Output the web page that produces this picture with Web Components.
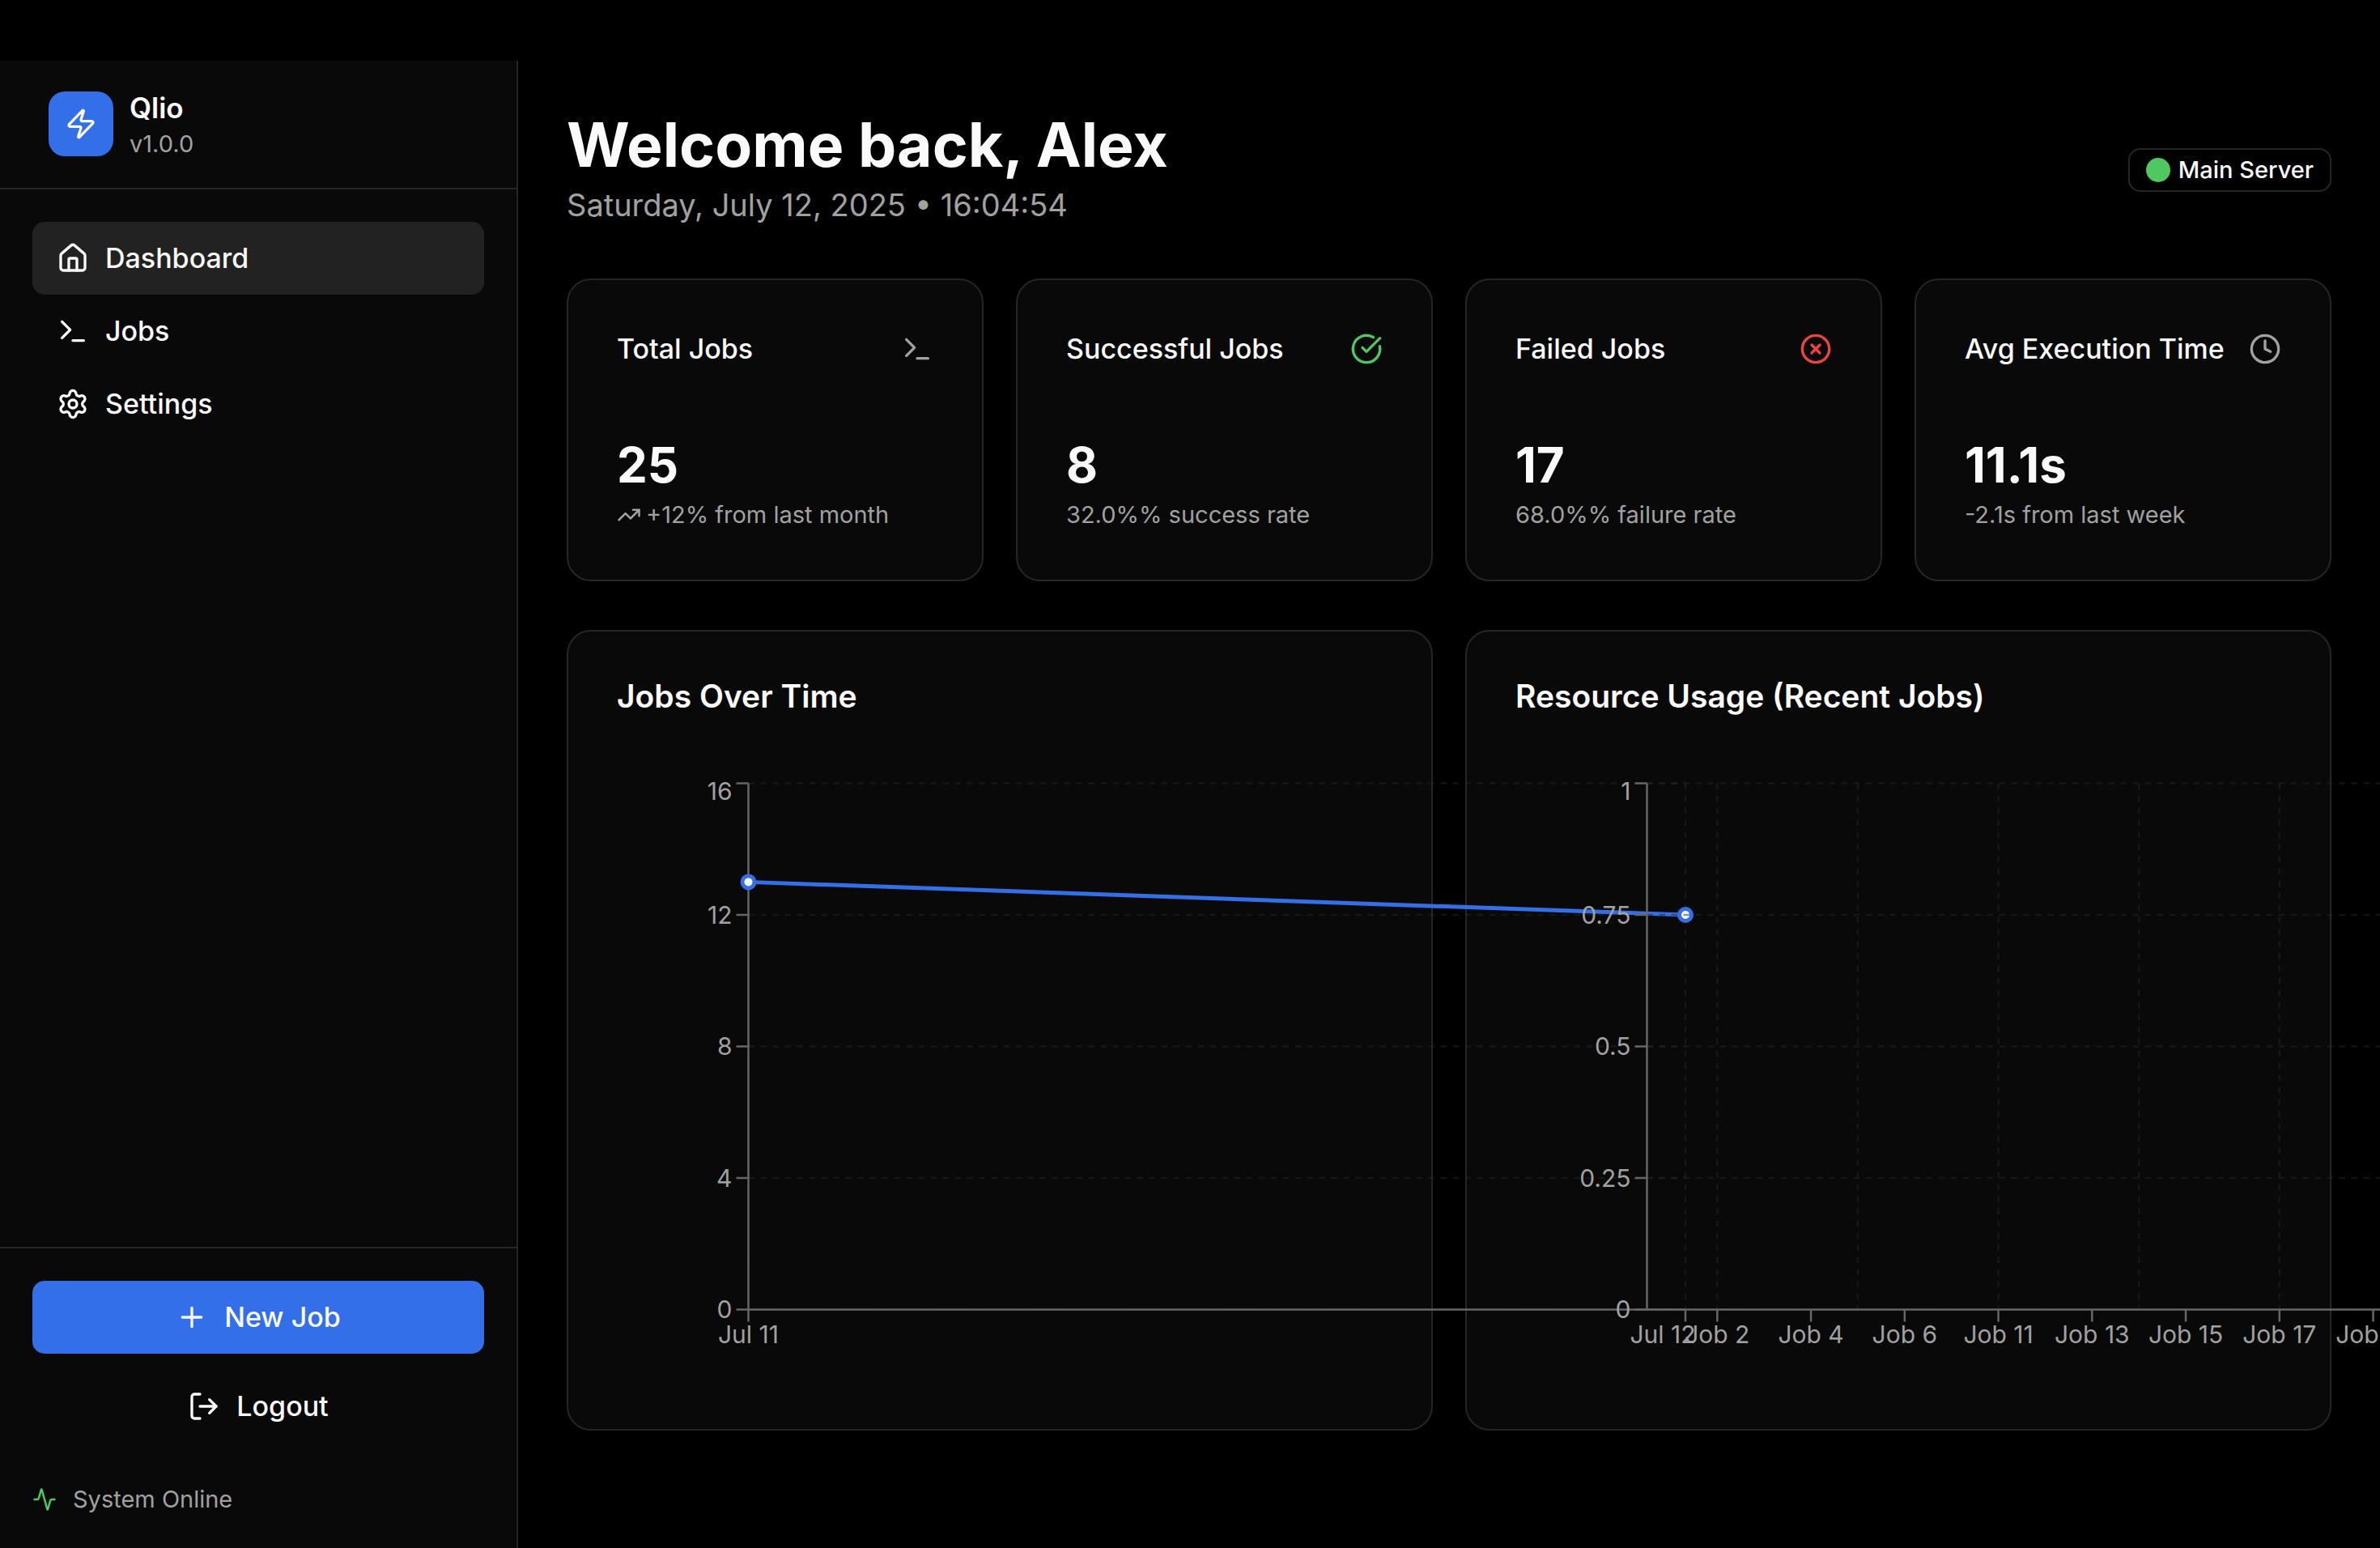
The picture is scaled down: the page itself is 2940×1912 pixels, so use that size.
<!DOCTYPE html>
<html lang="en">
<head>
<meta charset="utf-8">
<meta name="viewport" content="width=device-width, initial-scale=1">
<title>Qlio Dashboard</title>
<style>
  :root {
    --bg: #000;
    --surface: #090909;
    --accent: #222;
    --border: #262626;
    --text: #fafafa;
    --muted: #a1a1a1;
    --primary: #336fe8;
    --success: #50c860;
    --danger: #ea4540;
  }
  html, body { margin: 0; }
  body {
    background: var(--bg);
    color: var(--text);
    font-family: Inter, "Liberation Sans", sans-serif;
    font-size: 29px;
    line-height: 40px;
  }
</style>
</head>
<body>
<qlio-app></qlio-app>

<script>
const ICONS = {
  zap: '<path d="M4 14a1 1 0 0 1-.78-1.63l9.9-10.2a.5.5 0 0 1 .86.46l-1.92 6.02A1 1 0 0 0 13 10h7a1 1 0 0 1 .78 1.63l-9.9 10.2a.5.5 0 0 1-.86-.46l1.92-6.02A1 1 0 0 0 11 14z"/>',
  house: '<path d="M15 21v-8a1 1 0 0 0-1-1h-4a1 1 0 0 0-1 1v8"/><path d="M3 10a2 2 0 0 1 .709-1.528l7-5.999a2 2 0 0 1 2.582 0l7 5.999A2 2 0 0 1 21 10v9a2 2 0 0 1-2 2H5a2 2 0 0 1-2-2z"/>',
  terminal: '<path d="M12 19h8"/><path d="m4 17 6-6-6-6"/>',
  settings: '<path d="M9.671 4.136a2.34 2.34 0 0 1 4.659 0 2.34 2.34 0 0 0 3.319 1.915 2.34 2.34 0 0 1 2.33 4.033 2.34 2.34 0 0 0 0 3.831 2.34 2.34 0 0 1-2.33 4.033 2.34 2.34 0 0 0-3.319 1.915 2.34 2.34 0 0 1-4.659 0 2.34 2.34 0 0 0-3.32-1.915 2.34 2.34 0 0 1-2.33-4.033 2.34 2.34 0 0 0 0-3.831A2.34 2.34 0 0 1 6.35 6.051a2.34 2.34 0 0 0 3.319-1.915"/><circle cx="12" cy="12" r="3"/>',
  plus: '<path d="M5 12h14"/><path d="M12 5v14"/>',
  logout: '<path d="m16 17 5-5-5-5"/><path d="M21 12H9"/><path d="M9 21H5a2 2 0 0 1-2-2V5a2 2 0 0 1 2-2h4"/>',
  activity: '<path d="M22 12h-2.48a2 2 0 0 0-1.93 1.46l-2.35 8.36a.25.25 0 0 1-.48 0L9.24 2.18a.25.25 0 0 0-.48 0l-2.35 8.36A2 2 0 0 1 4.49 12H2"/>',
  check: '<path d="M21.801 10A10 10 0 1 1 17 3.335"/><path d="m9 11 3 3L22 4"/>',
  cross: '<circle cx="12" cy="12" r="10"/><path d="m15 9-6 6"/><path d="m9 9 6 6"/>',
  clock: '<circle cx="12" cy="12" r="10"/><path d="M12 6v6l4 2"/>',
  trend: '<path d="M16 7h6v6"/><path d="m22 7-8.5 8.5-5-5L2 17"/>'
};

function define(name, html, setup) {
  const template = document.createElement('template');
  template.innerHTML = html;
  customElements.define(name, class extends HTMLElement {
    constructor() {
      super();
      this.attachShadow({ mode: 'open' }).append(template.content.cloneNode(true));
    }
    connectedCallback() {
      if (setup) setup(this, this.shadowRoot);
    }
  });
}

class QlioIcon extends HTMLElement {
  static observedAttributes = ['name'];
  constructor() {
    super();
    this.attachShadow({ mode: 'open' }).innerHTML = `
      <style>
        :host { display: block; flex: none; width: 40px; height: 40px; }
        :host([small]) { width: 30px; height: 30px; }
        svg { display: block; width: 100%; height: 100%; }
      </style>
      <svg viewBox="0 0 24 24" fill="none" stroke="currentColor" stroke-width="2" stroke-linecap="round" stroke-linejoin="round" aria-hidden="true"></svg>`;
  }
  attributeChangedCallback(attribute, previous, name) {
    this.shadowRoot.querySelector('svg').innerHTML = ICONS[name] || '';
  }
}
customElements.define('qlio-icon', QlioIcon);

define('nav-item', `
  <style>
    :host { display: block; }
    a {
      display: flex; align-items: center; gap: 20px;
      height: 90px; padding: 0 30px; border-radius: 15px; box-sizing: border-box;
      color: inherit; text-decoration: none;
      font-size: 34px; font-weight: 500; line-height: 50px;
    }
    :host([active]) a { background: var(--accent); }
  </style>
  <a href="#"><qlio-icon></qlio-icon><slot></slot></a>
`, (host, root) => { root.querySelector('qlio-icon').setAttribute('name', host.getAttribute('icon')); });

define('action-button', `
  <style>
    :host { display: block; }
    button {
      display: flex; align-items: center; justify-content: center; gap: 20px;
      width: 100%; height: 90px; padding: 0; border: 0; border-radius: 15px;
      background: none; color: inherit; font: inherit; cursor: pointer;
      font-size: 34px; font-weight: 500; line-height: 50px;
    }
    :host([primary]) button { background: var(--primary); }
  </style>
  <button type="button"><slot name="icon"></slot><slot></slot></button>
`);

define('app-sidebar', `
  <style>
    :host {
      display: flex; flex-direction: column; flex: none; width: 640px; box-sizing: border-box;
      background: var(--surface); border-right: 2px solid var(--border);
    }
    header {
      display: flex; align-items: center; gap: 20px;
      height: 155px; padding: 0 60px 2px; border-bottom: 2px solid var(--border);
    }
    .logo {
      display: flex; align-items: center; justify-content: center;
      width: 80px; height: 80px; border-radius: 20px; background: var(--primary);
    }
    .name { font-size: 35px; font-weight: 600; line-height: 50px; }
    .version { color: var(--muted); }
    nav { flex: 1; padding: 40px; }
    footer {
      display: flex; flex-direction: column; gap: 20px;
      padding: 40px; border-top: 2px solid var(--border);
    }
    .status { display: flex; align-items: center; gap: 20px; padding-top: 30px; color: var(--muted); }
    .status qlio-icon { color: var(--success); }
  </style>
  <header>
    <div class="logo"><qlio-icon name="zap"></qlio-icon></div>
    <div>
      <div class="name">Qlio</div>
      <div class="version">v1.0.0</div>
    </div>
  </header>
  <nav>
    <nav-item icon="house" active>Dashboard</nav-item>
    <nav-item icon="terminal">Jobs</nav-item>
    <nav-item icon="settings">Settings</nav-item>
  </nav>
  <footer>
    <action-button primary><qlio-icon slot="icon" name="plus"></qlio-icon>New Job</action-button>
    <action-button><qlio-icon slot="icon" name="logout"></qlio-icon>Logout</action-button>
    <div class="status"><qlio-icon small name="activity"></qlio-icon><span>System Online</span></div>
  </footer>
`);

define('page-header', `
  <style>
    :host { display: flex; align-items: center; justify-content: space-between; }
    h1 { margin: 0; font-size: 75px; font-weight: 700; line-height: 87px; }
    p { margin: 0; font-size: 38px; line-height: 62px; color: var(--muted); }
    .badge {
      display: flex; align-items: center; gap: 10px;
      padding: 5px 20px; border: 2px solid var(--border); border-radius: 15px;
      font-weight: 500;
    }
    .dot { width: 30px; height: 30px; border-radius: 50%; background: var(--success); }
  </style>
  <div>
    <h1>Welcome back, Alex</h1>
    <p>Saturday, July 12, 2025 • 16:04:54</p>
  </div>
  <div class="badge"><span class="dot"></span><span>Main Server</span></div>
`);

define('stat-card', `
  <style>
    :host {
      display: block; padding: 60px; border: 2px solid var(--border); border-radius: 30px;
      background: var(--surface);
    }
    header { display: flex; align-items: center; justify-content: space-between; height: 50px; margin-bottom: 76px; }
    h2 { margin: 0; font-size: 34px; font-weight: 500; line-height: 50px; white-space: nowrap; }
    .value { font-size: 60px; font-weight: 700; line-height: 84px; }
    .note { display: flex; align-items: center; gap: 6px; color: var(--muted); }
  </style>
  <header><h2><slot name="title"></slot></h2><slot name="icon"></slot></header>
  <div class="value"><slot name="value"></slot></div>
  <div class="note"><slot></slot></div>
`);

define('chart-card', `
  <style>
    :host {
      display: block; min-width: 0; padding: 60px; border: 2px solid var(--border); border-radius: 30px;
      background: var(--surface);
    }
    h2 { margin: 0 0 75px; font-size: 39px; font-weight: 600; line-height: 40px; white-space: nowrap; }
  </style>
  <h2><slot name="title"></slot></h2>
  <slot></slot>
`);

/* Chart geometry is in chart units: 533 x 300, drawn at 2.5 px per unit. */
define('axis-chart', `
  <style>
    :host { display: block; position: relative; height: 750px; }
    svg { display: block; width: 1332px; height: 750px; overflow: visible; }
    text { font-size: 12px; fill: var(--muted); }
    .grid { stroke: var(--border); stroke-opacity: .5; stroke-dasharray: 3 3; }
    .axis { stroke: #666; }
    .series { stroke: var(--primary); stroke-width: 2; }
    .series circle { fill: #fff; }
  </style>
  <svg viewBox="0 0 533 300" preserveAspectRatio="xMinYMin slice" fill="none"></svg>
`, (host, root) => {
  const width = 533, left = 65, right = 528, top = 5, bottom = 265;
  const data = JSON.parse(host.getAttribute('data'));
  const span = right - left;
  const xAt = i => data.band ? left + span * (i + .5) / data.count : left + span * i / (data.count - 1);
  const yAt = v => bottom - (bottom - top) * v / data.max;
  const line = (x1, y1, x2, y2) => `<line x1="${x1}" y1="${y1}" x2="${x2}" y2="${y2}"/>`;
  let grid = '', axis = line(left, bottom, right, bottom) + line(left, top, left, bottom), labels = '';
  data.y.forEach(v => {
    const y = yAt(v);
    grid += line(left, y, right, y);
    axis += line(left - 6, y, left, y);
    labels += `<text x="${left - 8}" y="${Math.max(y, 9) + 4.3}" text-anchor="end">${v}</text>`;
  });
  data.grid.forEach(i => { grid += line(xAt(i), top, xAt(i), bottom); });
  data.x.forEach(([i, name]) => {
    const x = xAt(i);
    axis += line(x, bottom, x, bottom + 6);
    /* A label on the last edge is kept inside the chart. */
    const atEdge = x >= right;
    labels += `<text x="${atEdge ? width : x}" y="${bottom + 16.5}" text-anchor="${atEdge ? 'end' : 'middle'}">${name}</text>`;
  });
  let series = '';
  if (data.points) {
    series = `<polyline points="${data.points.map((v, i) => xAt(i) + ',' + yAt(v)).join(' ')}"/>` +
      data.points.map((v, i) => `<circle cx="${xAt(i)}" cy="${yAt(v)}" r="3"/>`).join('');
  }
  root.querySelector('svg').innerHTML =
    `<g class="grid">${grid}</g><g class="axis">${axis}</g><g>${labels}</g><g class="series">${series}</g>`;
});

define('qlio-app', `
  <style>
    :host { display: flex; min-height: 100vh; padding-top: 75px; box-sizing: border-box; }
    main {
      display: flex; flex-direction: column; gap: 60px;
      flex: 1; min-width: 0; padding: 60px; overflow: hidden;
    }
    .stats { display: grid; grid-template-columns: repeat(4, 1fr); gap: 40px; }
    .charts { display: grid; grid-template-columns: repeat(2, 1fr); gap: 40px; }
    .muted { color: var(--muted); }
    .success { color: var(--success); }
    .danger { color: var(--danger); }
  </style>
  <app-sidebar></app-sidebar>
  <main>
    <page-header></page-header>
    <section class="stats">
      <stat-card>
        <span slot="title">Total Jobs</span><qlio-icon slot="icon" class="muted" name="terminal"></qlio-icon>
        <span slot="value">25</span><qlio-icon small name="trend"></qlio-icon><span>+12% from last month</span>
      </stat-card>
      <stat-card>
        <span slot="title">Successful Jobs</span><qlio-icon slot="icon" class="success" name="check"></qlio-icon>
        <span slot="value">8</span><span>32.0%% success rate</span>
      </stat-card>
      <stat-card>
        <span slot="title">Failed Jobs</span><qlio-icon slot="icon" class="danger" name="cross"></qlio-icon>
        <span slot="value">17</span><span>68.0%% failure rate</span>
      </stat-card>
      <stat-card>
        <span slot="title">Avg Execution Time</span><qlio-icon slot="icon" class="muted" name="clock"></qlio-icon>
        <span slot="value">11.1s</span><span>-2.1s from last week</span>
      </stat-card>
    </section>
    <section class="charts">
      <chart-card>
        <span slot="title">Jobs Over Time</span>
        <axis-chart data='{"count":2,"max":16,"y":[0,4,8,12,16],"x":[[0,"Jul 11"],[1,"Jul 12"]],"grid":[0,1],"points":[13,12]}'></axis-chart>
      </chart-card>
      <chart-card>
        <span slot="title">Resource Usage (Recent Jobs)</span>
        <axis-chart data='{"band":true,"count":20,"max":1,"y":[0,0.25,0.5,0.75,1],"x":[[1,"Job 2"],[3,"Job 4"],[5,"Job 6"],[7,"Job 11"],[9,"Job 13"],[11,"Job 15"],[13,"Job 17"],[15,"Job 19"]],"grid":[1,4,7,10,13,16,19]}'></axis-chart>
      </chart-card>
    </section>
  </main>
`);
</script>
</body>
</html>
